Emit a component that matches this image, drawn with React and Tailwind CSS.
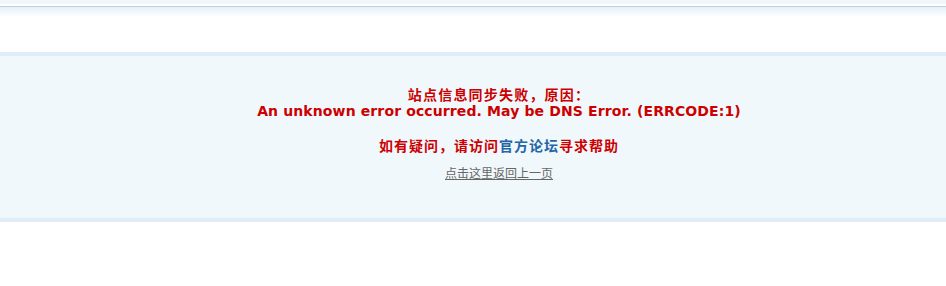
import React from "react";

const CJK = "font-['SimSun','Noto_Sans_CJK_SC',sans-serif]";

const App = () => {
  return (
    <div className="min-h-[286px] w-full bg-white">
      {/* top header strip */}
      <div className="h-[4px] bg-[#F0F7FB]" />
      <div className="h-[2px] bg-white" />
      <div className="h-[1px] bg-[#B9D3E4]" />
      <div className="h-[10px] bg-gradient-to-b from-[#E4F0F9] to-white" />
      <div className="h-[35px] bg-white" />

      {/* message box */}
      <div className="h-[170px] border-y-4 border-[#DEEDF8] bg-[#F1F8FC] pt-[30px] pl-[52px] text-center">
        <p className={`${CJK} text-[14px] leading-[17px] font-bold text-[#CC0000] tracking-[1.2px]`}>
          站点信息同步失败，原因：
        </p>
        <p className="font-['DejaVu_Sans',Verdana,sans-serif] text-[14px] leading-[17px] font-bold text-[#CC0000] tracking-[0.12px]">
          An unknown error occurred. May be DNS Error. (ERRCODE:1)
        </p>
        <p className={`${CJK} mt-[17px] text-[14px] leading-[17px] font-bold text-[#CC0000] tracking-[1px]`}>
          如有疑问，请访问<span className="text-[#2366A8]">官方论坛</span>寻求帮助
        </p>
        <p className="mt-[8px] leading-[20px]">
          <a href="#" className={`${CJK} text-[12px] text-[#666666] underline`}>
            点击这里返回上一页
          </a>
        </p>
      </div>
    </div>
  );
};

export default App;
